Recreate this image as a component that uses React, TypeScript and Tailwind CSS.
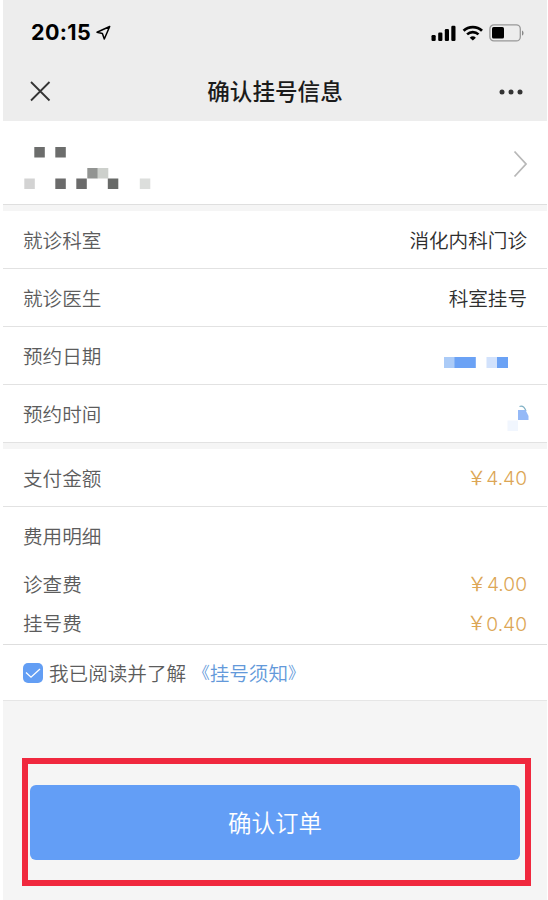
const visitRows = [
  { label: "就诊科室", value: "消化内科门诊" },
  { label: "就诊医生", value: "科室挂号" },
  { label: "预约日期", mosaic: "date" },
  { label: "预约时间", mosaic: "time" },
];

const fees = [
  { label: "诊查费", amount: "4.00" },
  { label: "挂号费", amount: "0.40" },
];

const nameBlocks = [
  { x: 11, y: 12, color: "#6c6d6c" },
  { x: 32, y: 12, color: "#6c6d6c" },
  { x: 64, y: 33, color: "#929492" },
  { x: 74.5, y: 33, color: "#cdd0cc" },
  { x: 1, y: 43.5, color: "#d3d3d3" },
  { x: 32, y: 43.5, color: "#6b6b6b" },
  { x: 53, y: 43.5, color: "#6b6b6b" },
  { x: 84.5, y: 43.5, color: "#686a68" },
  { x: 116.5, y: 43.5, color: "#dcdedc" },
];

const StatusBar = () => (
  <div className="flex h-[62px] items-center justify-between pt-[4px] pr-[22px] pl-[28px]">
    <div className="flex items-center">
      <span className="w-[62px] font-['Inter'] text-[21.5px] leading-none font-bold tracking-[0.35px] text-black">
        20:15
      </span>
      <svg width="16" height="16" viewBox="0 0 16 16" className="ml-[2px]" fill="none">
        <path
          d="M14.700 1.500 2 7.200l5.400 1.200 1.900 5.600z"
          stroke="#000"
          strokeWidth="1.5"
          strokeLinejoin="round"
        />
      </svg>
    </div>
    <div className="flex items-center">
      <svg width="26" height="16" viewBox="0 0 26 16">
        <rect x="0.5" y="10" width="4.2" height="6" rx="1.2" />
        <rect x="7.2" y="7.6" width="4.2" height="8.4" rx="1.2" />
        <rect x="13.8" y="4" width="4.2" height="12" rx="1.2" />
        <rect x="20.3" y="0.8" width="4.2" height="15.2" rx="1.2" />
      </svg>
      <svg width="22" height="16" viewBox="0 0 22 16" className="ml-[5px]" fill="none">
        <path d="M1.6 5.8a13.4 13.4 0 0 1 18.4 0" stroke="#000" strokeWidth="2.8" />
        <path d="M5.1 9.4a8.4 8.4 0 0 1 11.4 0" stroke="#000" strokeWidth="2.6" />
        <path d="M10.8 15.6 7.7 12.7a4.6 4.6 0 0 1 6.2 0z" fill="#000" />
      </svg>
      <svg width="36" height="18" viewBox="0 0 36 18" className="ml-[5px]" fill="none">
        <rect x="0.9" y="0.9" width="30.4" height="16" rx="4" stroke="#989898" strokeWidth="1.3" />
        <rect x="3" y="3" width="12" height="11.5" rx="1.6" fill="#000" />
        <path d="M33 6.4c2 .8 2 4.4 0 5.2z" fill="#888" />
      </svg>
    </div>
  </div>
);

const NavBar = () => (
  <div className="flex h-[59px] items-center justify-between pr-[24px] pl-[27px]">
    <svg width="21" height="21" viewBox="0 0 21 21">
      <path d="m1 1 18.500 18.500m0-18.500-18.500 18.500" stroke="#333" strokeWidth="1.8" />
    </svg>
    <h1 className="text-[22.6px] leading-none font-medium text-[#1b1b1b]">确认挂号信息</h1>
    <svg width="24" height="6" viewBox="0 0 24 6" fill="#333">
      <circle cx="3" cy="3" r="2.5" />
      <circle cx="12" cy="3" r="2.5" />
      <circle cx="21" cy="3" r="2.5" />
    </svg>
  </div>
);

const DateMosaic = () => (
  <svg width="64" height="11" viewBox="0 0 64 11" className="mt-[13px] mr-[19px]">
    <rect width="11" height="11" fill="#abcbf7" />
    <rect x="10.5" width="21.3" height="11" fill="#6ba2f5" />
    <rect x="42.5" width="10.5" height="11" fill="#d2e2fc" />
    <rect x="53" width="11" height="11" fill="#6ba2f5" />
  </svg>
);

const TimeMosaic = () => (
  <svg width="22" height="26" viewBox="0 0 22 26" className="mt-[9px] mr-[-2px]">
    <path d="M12.500 1.500c3-1 5 .6 6.500 4.500" fill="none" stroke="#7fb0c4" strokeWidth="1.2" />
    <path d="M11 5h7.500l3 6v4H11z" fill="#95b9f7" />
    <rect x="0.5" y="15.500" width="10.500" height="10.500" fill="#f1f6fe" />
  </svg>
);

const Price = ({ amount }: { amount: string }) => (
  <span className="flex items-center text-[#dca655]">
    <span className="mb-[2px]">￥</span>
    <span className="mt-[2px] font-['Inter'] text-[19.2px] font-light">{amount}</span>
  </span>
);

export default function App() {
  return (
    <div className="h-[900px] w-[548px] overflow-hidden bg-white pr-px pl-[3px] font-['Noto_Sans_CJK_SC',sans-serif] text-[19.6px] leading-none font-[350] text-[#5c5c5c]">
      <div className="flex h-full flex-col bg-[#f5f5f5]">
        <header className="h-[121px] bg-[#ededed]">
          <StatusBar />
          <NavBar />
        </header>

        {/* Patient */}
        <section className="flex h-[84px] items-center justify-between border-b border-[#dfdfdf] bg-white pr-[19px] pl-[20px]">
          <svg width="130" height="60" viewBox="-0.3 0 130 60" className="mt-[5px]">
            {nameBlocks.map((b, i) => (
              <rect key={i} x={b.x} y={b.y} width="10.500" height="10.500" fill={b.color} />
            ))}
          </svg>
          <svg width="15" height="28" viewBox="0 0 15 28" className="mt-[3px]" fill="none">
            <path d="m1.500 1.500 11.500 12.500L1.500 26.500" stroke="#b8b8b8" strokeWidth="1.8" />
          </svg>
        </section>

        {/* Appointment */}
        <section className="mt-[6px] bg-white">
          {visitRows.map((row) => (
            <div
              key={row.label}
              className="flex h-[58px] items-center justify-between border-b border-[#e2e2e2] px-[20px]"
            >
              <span>{row.label}</span>
              {row.value && <span className="text-[#2e2e2e]">{row.value}</span>}
              {row.mosaic === "date" && <DateMosaic />}
              {row.mosaic === "time" && <TimeMosaic />}
            </div>
          ))}
        </section>

        {/* Payment */}
        <section className="mt-[6px] bg-white">
          <div className="flex h-[58px] items-center justify-between border-b border-[#e2e2e2] px-[20px]">
            <span>支付金额</span>
            <Price amount="4.40" />
          </div>
          <div className="h-[138px] border-b border-[#dedede] px-[20px]">
            <div className="flex h-[57px] items-center">费用明细</div>
            {fees.map((fee) => (
              <div key={fee.label} className="flex h-[39.5px] items-center justify-between">
                <span>{fee.label}</span>
                <Price amount={fee.amount} />
              </div>
            ))}
          </div>
          <div className="flex h-[56px] items-center border-b border-[#e6e6e6] pl-[20px]">
            <span className="flex h-[20px] w-[20px] items-center justify-center rounded-[5px] bg-[#639ef4]">
              <svg width="16" height="12" viewBox="0 0 16 12" fill="none">
                <path d="m1 5.500 5 4.700L15 2" stroke="#fff" strokeWidth="1.3" />
              </svg>
            </span>
            <span className="ml-[6px]">我已阅读并了解</span>
            <span className="ml-[7px] flex items-center text-[#6399da]">
              <span className="text-[16.5px]">《</span>
              <span>挂号须知</span>
              <span className="text-[16.5px]">》</span>
            </span>
          </div>
        </section>

        {/* Submit */}
        <div className="mt-[57px] ml-[19px] h-[128px] w-[509px] border-6 border-[#f0283e] px-[2px] pt-[21px]">
          <button className="flex h-[75px] w-[490px] items-center justify-center rounded-[6px] bg-[#639ef6] text-[23.5px] leading-none font-[350] text-white">
            确认订单
          </button>
        </div>
      </div>
    </div>
  );
}
